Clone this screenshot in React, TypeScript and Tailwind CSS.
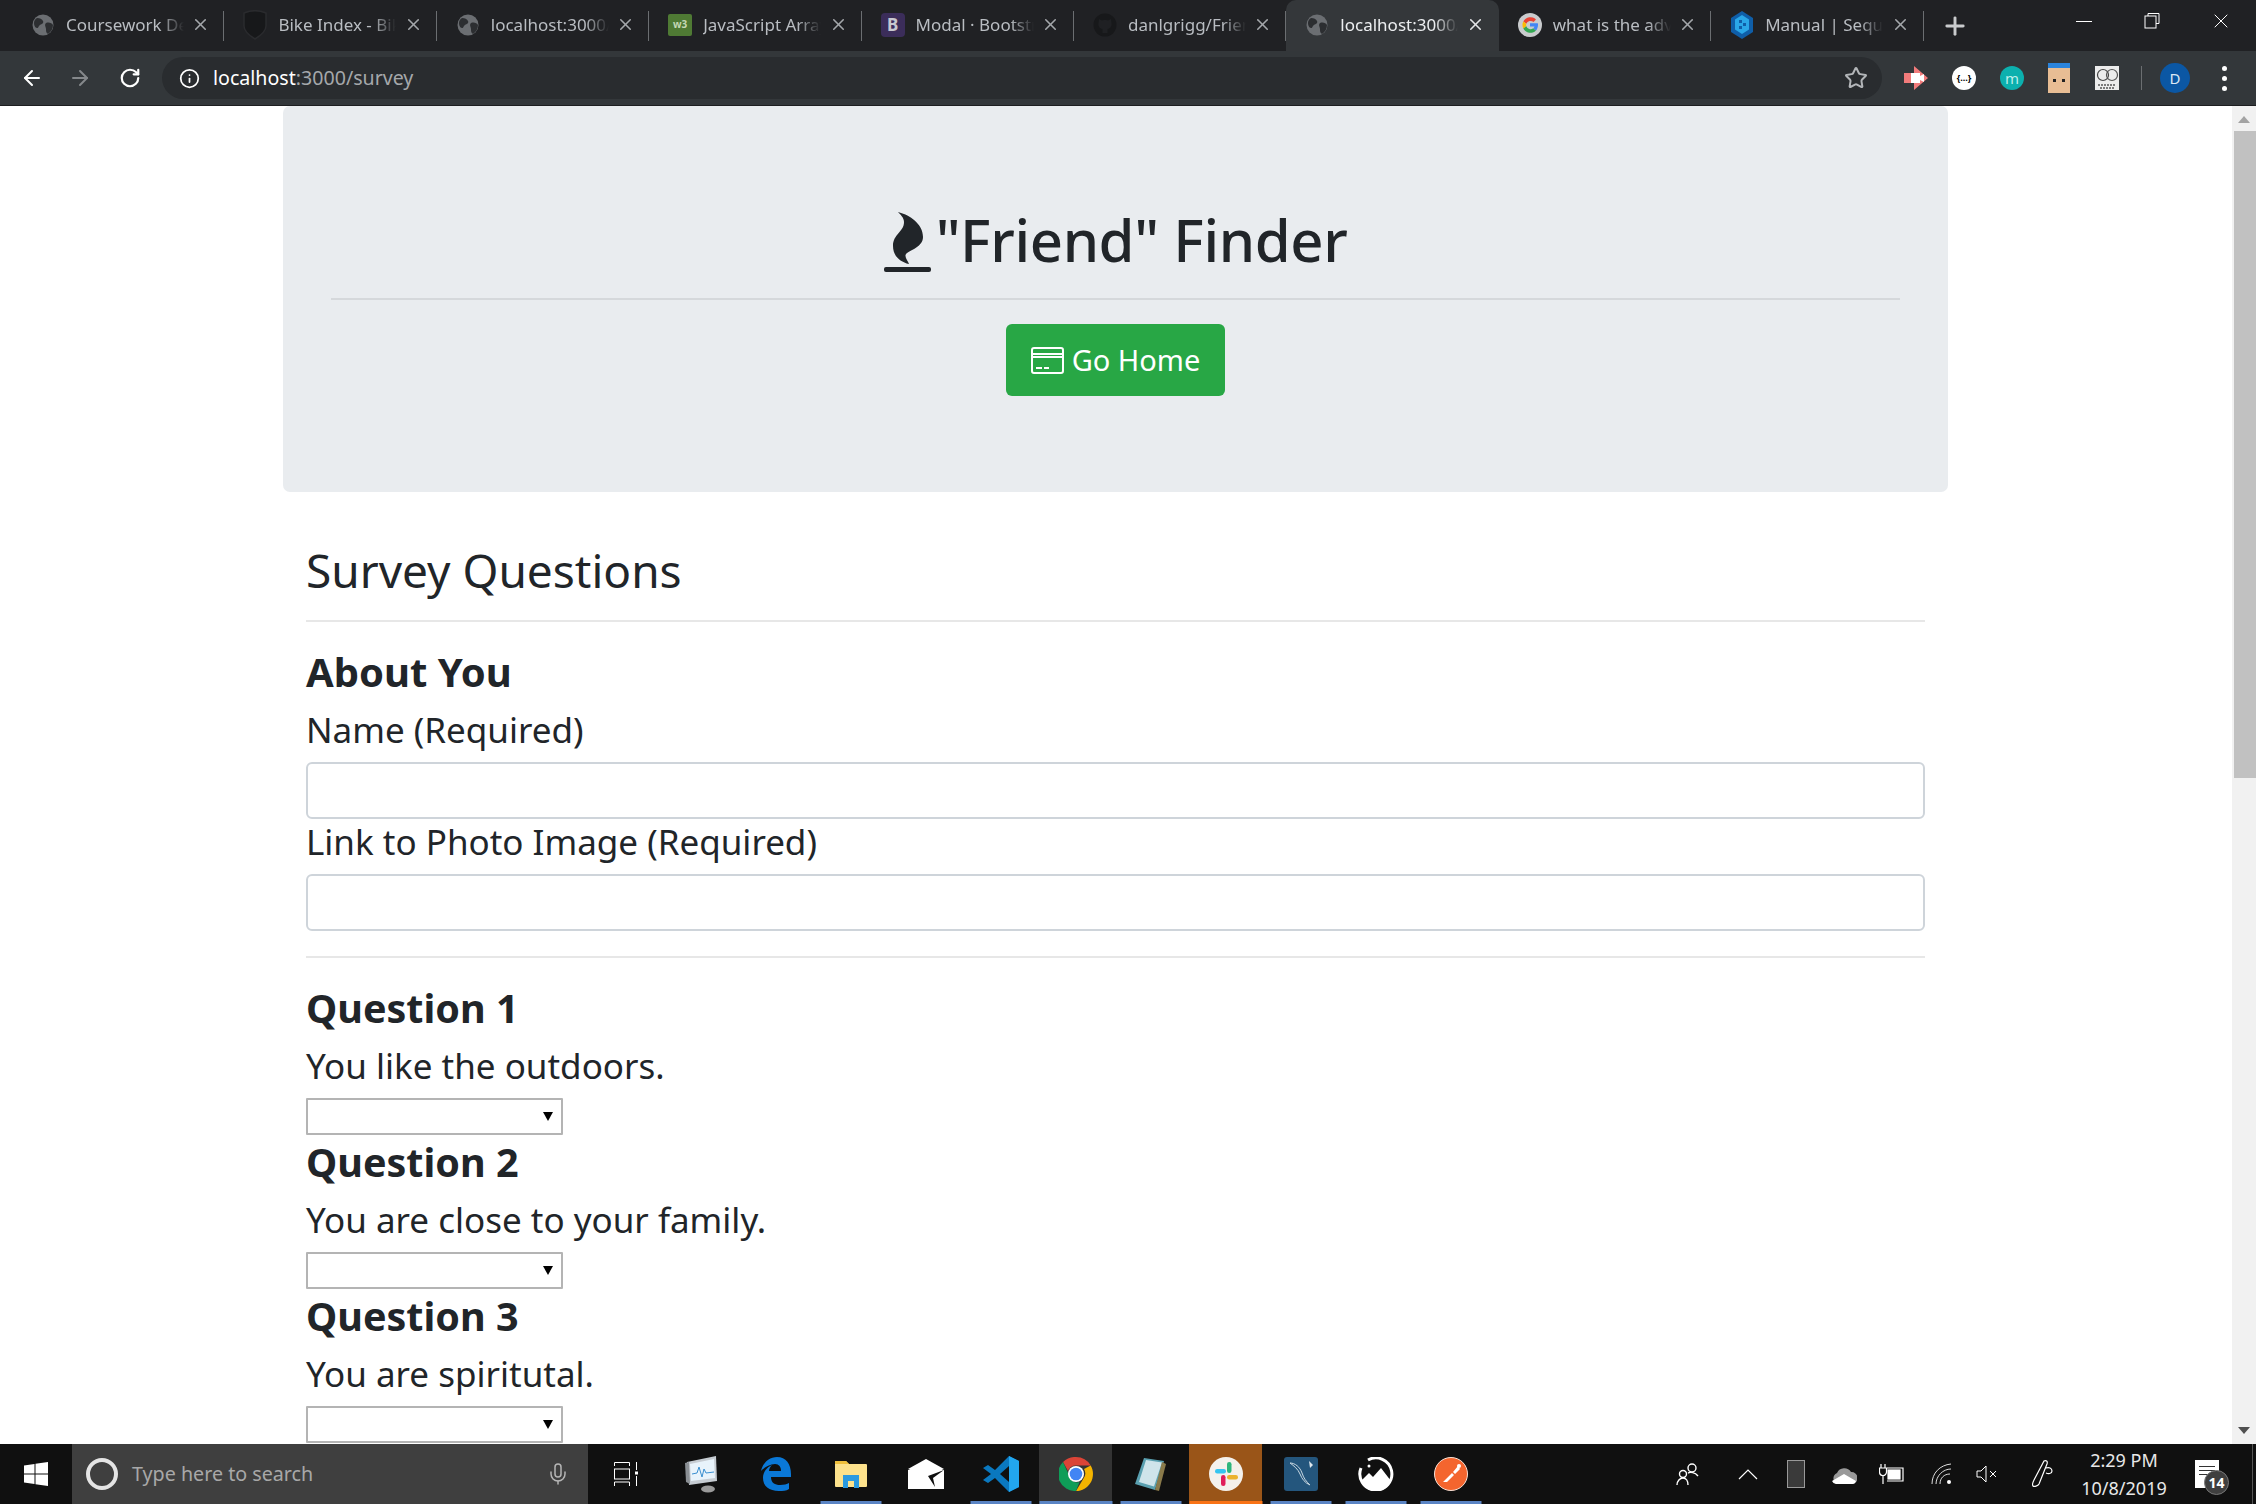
import { ArrowLeft, ArrowRight, Info, Mic, Plus, RotateCw, Star, X } from "lucide-react";
import type { ReactNode } from "react";

const uiFont = "font-['Noto_Sans','Open_Sans',sans-serif]";

const Globe = () => (
  <svg width="22" height="22" viewBox="0 0 22 22">
    <circle cx="11" cy="11" r="10.5" fill="#6b6e72" />
    <path d="M5 4c3 0 5 1 6 3s-1 3-3 4-1 3-3 3-3-3-3-5 1-4 3-5zM14 9c3-1 6 0 7 2 0 4-2 7-5 9-2-1-2-3-2-5s-2-4 0-6z" fill="#2c2e31" />
  </svg>
);

const BikeIcon = () => (
  <svg width="26" height="30" viewBox="0 0 26 30">
    <path d="M2 3c7-3 15-3 22 0v13c0 6-6 10-11 13C8 26 2 22 2 16z" fill="#17181a" stroke="#2a2b2e" strokeWidth="1.5" />
  </svg>
);

const W3Icon = () => (
  <div className="flex h-[22px] w-[24px] items-center justify-center rounded-[2px] bg-[#4f7a34] text-[10px] font-bold text-[#c5d8b5]">w3</div>
);

const BootstrapIcon = () => (
  <div className="flex h-[24px] w-[24px] items-center justify-center rounded-[4px] bg-[#3b2d5a] text-[17px] font-bold text-[#c8c8d0]">B</div>
);

const GithubIcon = () => (
  <svg width="24" height="24" viewBox="0 0 24 24">
    <circle cx="12" cy="12" r="11.5" fill="#17181a" />
    <path d="M6 6l3 1.5c2-.6 4-.6 6 0L18 6l.5 4c.6 3-1 5.5-4 6v4h-5v-4c-3-.5-4.600-3-4-6z" fill="#1f2023" />
  </svg>
);

const GoogleIcon = () => (
  <svg width="24" height="24" viewBox="0 0 24 24">
    <circle cx="12" cy="12" r="12" fill="#c9cbcd" />
    <path d="M18 6.500A8 8 0 0 0 5.300 8.500l3 2.300A4.600 4.600 0 0 1 15.500 9z" fill="#ea4335" />
    <path d="M5.300 8.500a8 8 0 0 0 0 7l3-2.300a4.500 4.500 0 0 1 0-2.400z" fill="#fbbc05" />
    <path d="M5.300 15.500a8 8 0 0 0 12.700 2l-2.800-2.200a4.600 4.600 0 0 1-6.900-2.100z" fill="#34a853" />
    <path d="M20 12c0-.6 0-1.200-.2-1.700H12v3.200h4.500c-.2 .8-.7 1.400-1.300 1.800l2.800 2.200c1.200-1.300 2-3.300 2-5.500z" fill="#4285f4" />
  </svg>
);

const SequelizeIcon = () => (
  <svg width="22" height="28" viewBox="0 0 22 28">
    <path d="M11 0l11 7v14l-11 7-11-7V7z" fill="#0f5ea8" />
    <path d="M11 4l7 4.500v10l-7 4.500-7-4.500v-10z" fill="#2aa7e8" />
    <path d="M8 9h3v3H8zM12 12h3v3h-3zM8 15h3v3H8z" fill="#0f5ea8" />
  </svg>
);

const tabs: { title: string; icon: ReactNode; active?: boolean }[] = [
  { title: "Coursework Dev", icon: <Globe /> },
  { title: "Bike Index - Bike", icon: <BikeIcon /> },
  { title: "localhost:3000/", icon: <Globe /> },
  { title: "JavaScript Array", icon: <W3Icon /> },
  { title: "Modal · Bootstrap", icon: <BootstrapIcon /> },
  { title: "danlgrigg/Friend", icon: <GithubIcon /> },
  { title: "localhost:3000/", icon: <Globe />, active: true },
  { title: "what is the adv", icon: <GoogleIcon /> },
  { title: "Manual | Sequelize", icon: <SequelizeIcon /> },
];

const Tab = ({ title, icon, active }: { title: string; icon: ReactNode; active?: boolean }) => (
  <div
    className={`relative flex h-[51px] w-[212.4px] shrink-0 items-center pb-[2px] pl-[18px] pr-[14px] ${
      active ? "rounded-t-[10px] bg-[#34373a]" : ""
    }`}
  >
    <div className="flex w-[26px] shrink-0 justify-center">{icon}</div>
    <div
      className={`ml-[10px] w-[118px] overflow-hidden whitespace-nowrap text-[17px] [mask-image:linear-gradient(to_right,black_80%,transparent)] ${
        active ? "text-[#eceef0]" : "text-[#b9bdc2]"
      }`}
    >
      {title}
    </div>
    <X size={19} strokeWidth={2} className={`ml-auto ${active ? "text-[#e4e6e8]" : "text-[#a4a7ab]"}`} />
    {!active && <div className="absolute right-0 top-[11px] h-[30px] w-px bg-[#6b6e71]" />}
  </div>
);

const TabStrip = () => (
  <div className="flex h-[51px] shrink-0 items-center bg-[#202124] pl-[12px]">
    {tabs.map((t, i) => (
      <Tab key={i} {...t} />
    ))}
    <Plus size={28} strokeWidth={2.5} className="ml-[17px] text-[#c9cbcd]" />
    <div className="ml-auto flex h-full items-start text-white">
      <div className="flex h-[42px] w-[68px] items-center justify-center">
        <div className="h-px w-[16px] bg-white" />
      </div>
      <div className="flex h-[42px] w-[68px] items-center justify-center">
        <svg width="16" height="16" viewBox="0 0 16 16" fill="none" stroke="white" strokeWidth="1">
          <path d="M4 3V.5h11v10h-3" />
          <rect x="1" y="3" width="11" height="12" />
        </svg>
      </div>
      <div className="flex h-[42px] w-[70px] items-center justify-center">
        <X size={24} strokeWidth={1} />
      </div>
    </div>
  </div>
);

const Toolbar = () => (
  <div className="flex h-[55px] shrink-0 items-center border-b border-[#1d1e20] bg-[#33373a]">
    <div className="flex w-[162px] items-center pl-[20px] text-white">
      <ArrowLeft size={24} strokeWidth={2} />
      <ArrowRight size={24} strokeWidth={2} className="ml-[24px] text-[#85888b]" />
      <RotateCw size={22} strokeWidth={2.4} className="ml-[27px]" />
    </div>
    <div className="flex h-[42px] w-[1720px] items-center rounded-full bg-[#292c2f] pl-[17px] pr-[14px]">
      <Info size={21} strokeWidth={2} className="text-white" />
      <div className="ml-[13px] text-[19.6px] text-[#a5a8ab]">
        <span className="text-white">localhost</span>:3000/survey
      </div>
      <Star size={24} strokeWidth={2} className="ml-auto text-[#b3b6b9]" />
    </div>
    <div className="ml-[22px] flex items-center">
      <div className="flex w-[24px] justify-center">
        <svg width="24" height="28" viewBox="0 0 24 28">
          <path d="M0 9h10V2l14 12-14 12v-7H0z" fill="#f27b7b" />
          <rect x="7" y="9" width="9" height="10" fill="#fff" />
          <path d="M16 12l4-2v8l-4-2z" fill="#fff" />
        </svg>
      </div>
      <div className="ml-[24px] flex h-[24px] w-[24px] items-center justify-center rounded-full bg-white text-[9px] font-bold text-black">{"{...}"}</div>
      <div className="ml-[24px] flex h-[24px] w-[24px] items-center justify-center rounded-full bg-[#0cb0ae] text-[15px] text-[#bdeeea]">m</div>
      <div className="relative ml-[24px] h-[30px] w-[22px] border-t-[5px] border-[#2b84dc] bg-[#e8bd94]">
        <div className="absolute left-[5px] top-[11px] h-[3px] w-[3px] bg-[#222]" />
        <div className="absolute right-[5px] top-[11px] h-[3px] w-[3px] bg-[#222]" />
      </div>
      <svg width="24" height="24" viewBox="0 0 24 24" className="ml-[25px]">
        <rect width="24" height="24" fill="#ececec" />
        <circle cx="8" cy="9" r="5.500" fill="none" stroke="#444" strokeWidth="1.2" />
        <circle cx="17" cy="9" r="5.500" fill="none" stroke="#555" strokeWidth="1.2" />
        <path d="M3 19h18M5 22h14" stroke="#555" strokeWidth="1.400" strokeDasharray="2 1" />
      </svg>
      <div className="ml-[22px] h-[24px] w-px bg-[#6b6e71]" />
      <div className="ml-[18px] flex h-[30px] w-[30px] items-center justify-center rounded-full bg-[#0b57a4] text-[15px] text-[#dce8f5]">D</div>
      <div className="ml-[32px] flex w-[6px] flex-col gap-[5px]">
        <div className="h-[5px] w-[5px] rounded-full bg-white" />
        <div className="h-[5px] w-[5px] rounded-full bg-white" />
        <div className="h-[5px] w-[5px] rounded-full bg-white" />
      </div>
    </div>
  </div>
);

const FlameIcon = () => (
  <svg width="47" height="60" viewBox="0 0 47 60" className="shrink-0">
    <path d="M14 0C26 3 39 12 39 25 39 35 26 38 22 42 20 45 24 49 25 52 16 50 9 44 9 34 9 22 20 20 20 10 20 6 17 3 14 0Z" fill="#212529" />
    <rect x="0" y="55" width="47" height="5" rx="2" fill="#212529" />
  </svg>
);

const CardIcon = () => (
  <svg width="33" height="27" viewBox="0 0 33 27" fill="none" stroke="white" strokeWidth="2">
    <rect x="1" y="1" width="31" height="25" rx="2" />
    <path d="M1 7h31M1 10h31" />
    <path d="M5 21h6M13 21h5" />
  </svg>
);

const Jumbotron = () => (
  <div className="rounded-[7px] bg-[#e9ecef] px-[48px] pb-[96px] pt-[98px]">
    <h1 className="flex items-end justify-center text-[58px] font-medium leading-[72px] tracking-[-0.4px] text-[#212529]">
      <div className="mb-[4px] mr-[5px]">
        <FlameIcon />
      </div>
      <span>"Friend" Finder</span>
    </h1>
    <hr className="mt-[22px] border-t-2 border-[#d5d8db]" />
    <div className="mt-[24px] flex justify-center">
      <button className="flex h-[72px] w-[219px] items-center justify-center gap-[8px] rounded-[6px] bg-[#28a745] text-[29px] text-white">
        <CardIcon />
        Go Home
      </button>
    </div>
  </div>
);

const questions = ["You like the outdoors.", "You are close to your family.", "You are spiritutal."];

const SurveySelect = () => (
  <div className="relative mt-[9px] h-[37px] w-[257px]">
    <select className="block h-full w-full appearance-none rounded-[1px] border-2 border-[#b4b4b4] bg-white" />
    <div className="pointer-events-none absolute left-[237px] top-[14px] h-0 w-0 border-x-[5px] border-t-[9px] border-x-transparent border-t-black" />
  </div>
);

const SurveyForm = () => (
  <div className="px-[23px] text-[#212529]">
    <h2 className="mt-[49px] text-[46px] leading-[58px]">Survey Questions</h2>
    <hr className="mt-[21px] border-t-2 border-[#e7e7e7]" />
    <h3 className="mt-[25px] text-[40px] font-bold leading-[50px]">About You</h3>
    <label className="mt-[10px] block text-[35px] leading-[46px]">Name (Required)</label>
    <input className="mt-[9px] block h-[57px] w-full rounded-[6px] border-2 border-[#ced4da] bg-white" />
    <label className="block text-[35px] leading-[46px]">Link to Photo Image (Required)</label>
    <input className="mt-[9px] block h-[57px] w-full rounded-[6px] border-2 border-[#ced4da] bg-white" />
    <hr className="mt-[25px] border-t-2 border-[#e7e7e7]" />
    <div className="mt-[25px]">
      {questions.map((q, i) => (
        <div key={q} className="mb-[2px]">
          <h3 className="text-[39.5px] font-bold leading-[50px]">Question {i + 1}</h3>
          <p className="mt-[10px] text-[35px] leading-[46px]">{q}</p>
          <SurveySelect />
        </div>
      ))}
    </div>
  </div>
);

const Scrollbar = () => (
  <div className="flex w-[24px] shrink-0 flex-col items-center bg-[#f1f1f1]">
    <div className="mt-[10px] h-0 w-0 border-x-[6px] border-b-[7px] border-x-transparent border-b-[#a3a3a3]" />
    <div className="ml-[2px] mt-[8px] h-[647px] w-[22px] bg-[#c1c1c1]" />
    <div className="mt-auto mb-[10px] h-0 w-0 border-x-[6px] border-t-[7px] border-x-transparent border-t-[#505050]" />
  </div>
);

const WindowsLogo = () => (
  <svg width="24" height="24" viewBox="0 0 24 24" fill="white">
    <path d="M0 3.500 10.500 2v9.500H0zM11.500 1.800 24 0v11.500H11.500zM0 12.500h10.500V22L0 20.500zM11.500 12.500H24V24l-12.500-1.800z" />
  </svg>
);

const TaskView = () => (
  <svg width="24" height="24" viewBox="0 0 24 24" fill="none" stroke="white" strokeWidth="1">
    <path d="M.5 4V.5h15V4" />
    <rect x=".5" y="7" width="15" height="10" />
    <path d="M.5 24v-4h15v4M22.500 0v8M22.500 14v10" />
    <rect x="21" y="9.500" width="3" height="3" fill="white" stroke="none" />
  </svg>
);

const PerfIcon = () => (
  <svg width="34" height="38" viewBox="0 0 34 38">
    <path d="M3 7 32 1l1 25-28 4z" fill="#c6ccd2" />
    <path d="M6 9 30 4l1 19-24 3z" fill="#e8f3fb" />
    <path d="M8 19l5-1 2-6 3 10 2-8 2 4 8-1" fill="none" stroke="#3a8fd0" strokeWidth="1" />
    <ellipse cx="24" cy="34" rx="7" ry="3.500" fill="#9a9a9a" />
    <path d="M1 8l4-1 1 22-4-2z" fill="#8a8f94" />
  </svg>
);

const EdgeIcon = () => (
  <svg width="32" height="34" viewBox="0 0 32 34">
    <path d="M1 14C3 5 10 0 17 0c9 0 14 7 14 17v3H11c0 6 4 8 9 8 4 0 7-1 9-2v6c-3 2-6 2-10 2C9 34 3 29 3 21c0-6 4-11 9-13-2 2-3 4-3 6h12c0-4-2-7-6-7-5 0-10 3-14 7z" fill="#0a78d7" />
  </svg>
);

const FolderIcon = () => (
  <svg width="32" height="28" viewBox="0 0 32 28">
    <path d="M0 2a1 1 0 0 1 1-1h10l3 3h17a1 1 0 0 1 1 1v21a1 1 0 0 1-1 1H1a1 1 0 0 1-1-1z" fill="#fde28c" />
    <path d="M0 2a1 1 0 0 1 1-1h10l3 3H0z" fill="#f0c03c" />
    <path d="M8 28V15h16v13h-5v-7h-6v7z" fill="#2b9ae0" />
  </svg>
);

const MailIcon = () => (
  <svg width="36" height="30" viewBox="0 0 36 30">
    <path d="M0 10 18 0l18 10-18 8z" fill="white" />
    <path d="M0 11h36v19H0z" fill="white" />
    <path d="M36 11 20 17l7 11-2-9z" fill="#101010" />
  </svg>
);

const VsCodeIcon = () => (
  <svg width="36" height="36" viewBox="0 0 36 36">
    <path d="M26 0l10 5v26l-10 5-14-14-7 5-5-3 8-6-8-6 5-3 7 5z" fill="#0a78bf" />
    <path d="M26 0l10 5v26l-10 5z" fill="#22a6ee" />
    <path d="M26 10l-9 8 9 8z" fill="#101010" />
  </svg>
);

const ChromeIcon = () => (
  <svg width="34" height="34" viewBox="0 0 34 34">
    <path d="M17 0a17 17 0 0 1 14.700 8.500H17a8.500 8.500 0 0 0-8 5.500L4 5A17 17 0 0 1 17 0z" fill="#db4437" />
    <path d="M31.700 8.500A17 17 0 0 1 17 34l7.500-12.500A8.500 8.500 0 0 0 25 12z" fill="#f4b400" />
    <path d="M17 34A17 17 0 0 1 4 5l5.500 12a8.500 8.500 0 0 0 11 8z" fill="#0f9d58" />
    <circle cx="17" cy="17" r="8" fill="white" />
    <circle cx="17" cy="17" r="6.300" fill="#4285f4" />
  </svg>
);

const NotepadIcon = () => (
  <svg width="32" height="34" viewBox="0 0 32 34">
    <path d="M9 1l20 3-9 29L0 27z" fill="#5aa0b0" />
    <path d="M11 3l16 2.500-8 24L4 25z" fill="#cfe4ea" />
    <path d="M27 5l4 2-7 27-4-1z" fill="#8a7a4a" />
  </svg>
);

const SlackIcon = () => (
  <svg width="34" height="34" viewBox="0 0 34 34">
    <circle cx="17" cy="17" r="17" fill="#f4f1ec" />
    <rect x="18" y="5" width="4.500" height="11" rx="2.200" fill="#2eb67d" />
    <rect x="6" y="12" width="11" height="4.500" rx="2.200" fill="#36c5f0" />
    <rect x="18" y="18" width="11" height="4.500" rx="2.200" fill="#ecb22e" />
    <rect x="12" y="18" width="4.500" height="11" rx="2.200" fill="#e01e5a" />
  </svg>
);

const MysqlIcon = () => (
  <svg width="34" height="34" viewBox="0 0 34 34">
    <rect width="34" height="34" rx="3" fill="#24567d" />
    <path d="M6 6c5 0 10 4 12 10s4 8 8 12c-5-2-8-6-10-11S10 9 6 6z" fill="none" stroke="#c9d8e2" strokeWidth="1" />
    <path d="M25 4l4 4-3 3z" fill="#dfe8ee" />
  </svg>
);

const KiteIcon = () => (
  <svg width="36" height="34" viewBox="0 0 36 34">
    <path d="M10 3a16 16 0 1 1-7 8" fill="none" stroke="white" strokeWidth="3" />
    <path d="M3 24l8-8 4 4 8-9 10 13a16 16 0 0 1-30 0z" fill="white" />
    <circle cx="11" cy="9" r="1.500" fill="white" />
  </svg>
);

const PostmanIcon = () => (
  <svg width="34" height="34" viewBox="0 0 34 34">
    <circle cx="17" cy="17" r="16.500" fill="#f4652e" stroke="#f7e1d6" strokeWidth="1" />
    <path d="M9 25l9-9 2 2-7 7zM19 15l5-6 2 3-5 5z" fill="#fff" />
    <circle cx="25" cy="9" r="2" fill="#fff" />
  </svg>
);

const taskbarApps: { icon: ReactNode; running?: boolean; bg?: string; bar?: string }[] = [
  { icon: <PerfIcon /> },
  { icon: <EdgeIcon /> },
  { icon: <FolderIcon />, running: true },
  { icon: <MailIcon /> },
  { icon: <VsCodeIcon />, running: true },
  { icon: <ChromeIcon />, running: true, bg: "bg-[#333333]", bar: "w-[73px] bg-[#5a84c4]" },
  { icon: <NotepadIcon />, running: true },
  { icon: <SlackIcon />, running: true, bg: "bg-[#9a5518]", bar: "w-[73px] bg-[#f97316]" },
  { icon: <MysqlIcon />, running: true },
  { icon: <KiteIcon />, running: true },
  { icon: <PostmanIcon />, running: true },
];

const TraySlot = ({ w, children }: { w: string; children: ReactNode }) => (
  <div className={`flex h-full items-center justify-center ${w}`}>{children}</div>
);

const Tray = () => (
  <div className="ml-auto flex h-full items-center text-white">
    <TraySlot w="w-[60px]">
      <svg width="24" height="24" viewBox="0 0 24 24" fill="none" stroke="white" strokeWidth="1.400">
        <circle cx="16" cy="6" r="4" />
        <circle cx="7" cy="12" r="3.500" />
        <path d="M1 23c0-4 3-7 6-7s5 3 5 7M12 11c2-1 7-1 10 3" />
      </svg>
    </TraySlot>
    <TraySlot w="w-[60px]">
      <svg width="20" height="12" viewBox="0 0 20 12" fill="none" stroke="white" strokeWidth="1.200">
        <path d="M1 11l9-9 9 9" />
      </svg>
    </TraySlot>
    <TraySlot w="w-[36px]">
      <div className="h-[28px] w-[18px] border border-[#999] bg-[#3a3a3a]" />
    </TraySlot>
    <TraySlot w="w-[60px]">
      <svg width="26" height="20" viewBox="0 0 26 20">
        <path d="M6 20a6 6 0 0 1 0-11 8 8 0 0 1 14-1 6 6 0 0 1 1 12z" fill="#999" />
        <path d="M1 17l12-7 12 7a4 4 0 0 1-4 3H6a5 5 0 0 1-5-3z" fill="#fff" />
      </svg>
    </TraySlot>
    <TraySlot w="w-[36px]">
      <svg width="26" height="22" viewBox="0 0 26 22" fill="none" stroke="white" strokeWidth="1.200">
        <path d="M2 1v4M6 1v4M0.500 5h7v4a3 3 0 0 1-7 0zM4 12v9" />
        <path d="M8 5h16v13H8" />
        <rect x="9" y="7" width="12" height="9" fill="white" />
      </svg>
    </TraySlot>
    <TraySlot w="w-[64px]">
      <svg width="22" height="22" viewBox="0 0 22 22" fill="none" stroke="#ddd" strokeWidth="1">
        <path d="M1 21C1 10 9 2 20 1M5 21c0-8 7-15 15-15M9 21c0-6 4-10 10-10" />
        <circle cx="18" cy="19" r="2" fill="white" stroke="none" />
      </svg>
    </TraySlot>
    <TraySlot w="w-[26px]">
      <svg width="22" height="20" viewBox="0 0 22 20" fill="none" stroke="white" strokeWidth="1">
        <path d="M1 7h4l5-5v16l-5-5H1zM14 7l6 6M20 7l-6 6" />
      </svg>
    </TraySlot>
    <TraySlot w="w-[86px]">
      <svg width="22" height="30" viewBox="0 0 22 30" fill="none" stroke="white" strokeWidth="1.200">
        <path d="M12 2c2-1 4 0 3 3L7 25c-1 2-5 3-6 2s0-4 1-6zM14 9c3-1 6 0 6 3s-4 3-6 2" />
      </svg>
    </TraySlot>
    <TraySlot w="w-[76px]">
      <div className="text-center text-[18px] leading-[28px] text-[#e8e8e8]">
        <div className="whitespace-nowrap">2:29 PM</div>
        <div className="whitespace-nowrap">10/8/2019</div>
      </div>
    </TraySlot>
    <TraySlot w="w-[90px]">
      <div className="relative h-[28px] w-[24px] bg-white px-[4px] pt-[6px]">
        <div className="mb-[3px] h-px bg-[#333]" />
        <div className="mb-[3px] h-px bg-[#333]" />
        <div className="h-px bg-[#333]" />
        <div className="absolute left-[9px] top-[10px] flex h-[25px] w-[25px] items-center justify-center rounded-full border border-[#777] bg-[#3f3f3f] text-[14px] font-bold text-white">14</div>
      </div>
    </TraySlot>
    <div className="h-full w-[4px] border-l border-[#555]" />
  </div>
);

const Taskbar = () => (
  <div className="flex h-[60px] shrink-0 items-center bg-[#101010]">
    <div className="flex h-full w-[72px] items-center justify-center">
      <WindowsLogo />
    </div>
    <div className="flex h-full w-[516px] items-center bg-[#3f3f3f] pl-[14px]">
      <div className="h-[32px] w-[32px] rounded-full border-[4px] border-[#e4e4e4]" />
      <span className="ml-[14px] text-[19.7px] text-[#a8a8a8]">Type here to search</span>
      <Mic size={24} strokeWidth={1.5} className="ml-auto mr-[18px] text-[#b5b5b5]" />
    </div>
    <div className="flex h-full w-[75px] items-center justify-center">
      <TaskView />
    </div>
    {taskbarApps.map((app, i) => (
      <div key={i} className="relative flex h-full w-[75px] items-center justify-center">
        {app.bg && <div className={`absolute inset-y-0 left-[1px] w-[73px] ${app.bg}`} />}
        <div className="relative flex">{app.icon}</div>
        {app.running && (
          <div className={`absolute bottom-0 left-1/2 h-[3px] -translate-x-1/2 ${app.bar ?? "w-[61px] bg-[#5a84c4]"}`} />
        )}
      </div>
    ))}
    <Tray />
  </div>
);

const App = () => (
  <div className={`flex h-[1504px] w-[2256px] flex-col overflow-hidden bg-white ${uiFont}`}>
    <TabStrip />
    <Toolbar />
    <div className="flex min-h-0 flex-1">
      <div className="min-w-0 flex-1 overflow-hidden pr-[1px]">
        <div className="mx-auto w-[1665px]">
          <Jumbotron />
          <SurveyForm />
        </div>
      </div>
      <Scrollbar />
    </div>
    <Taskbar />
  </div>
);

export default App;
